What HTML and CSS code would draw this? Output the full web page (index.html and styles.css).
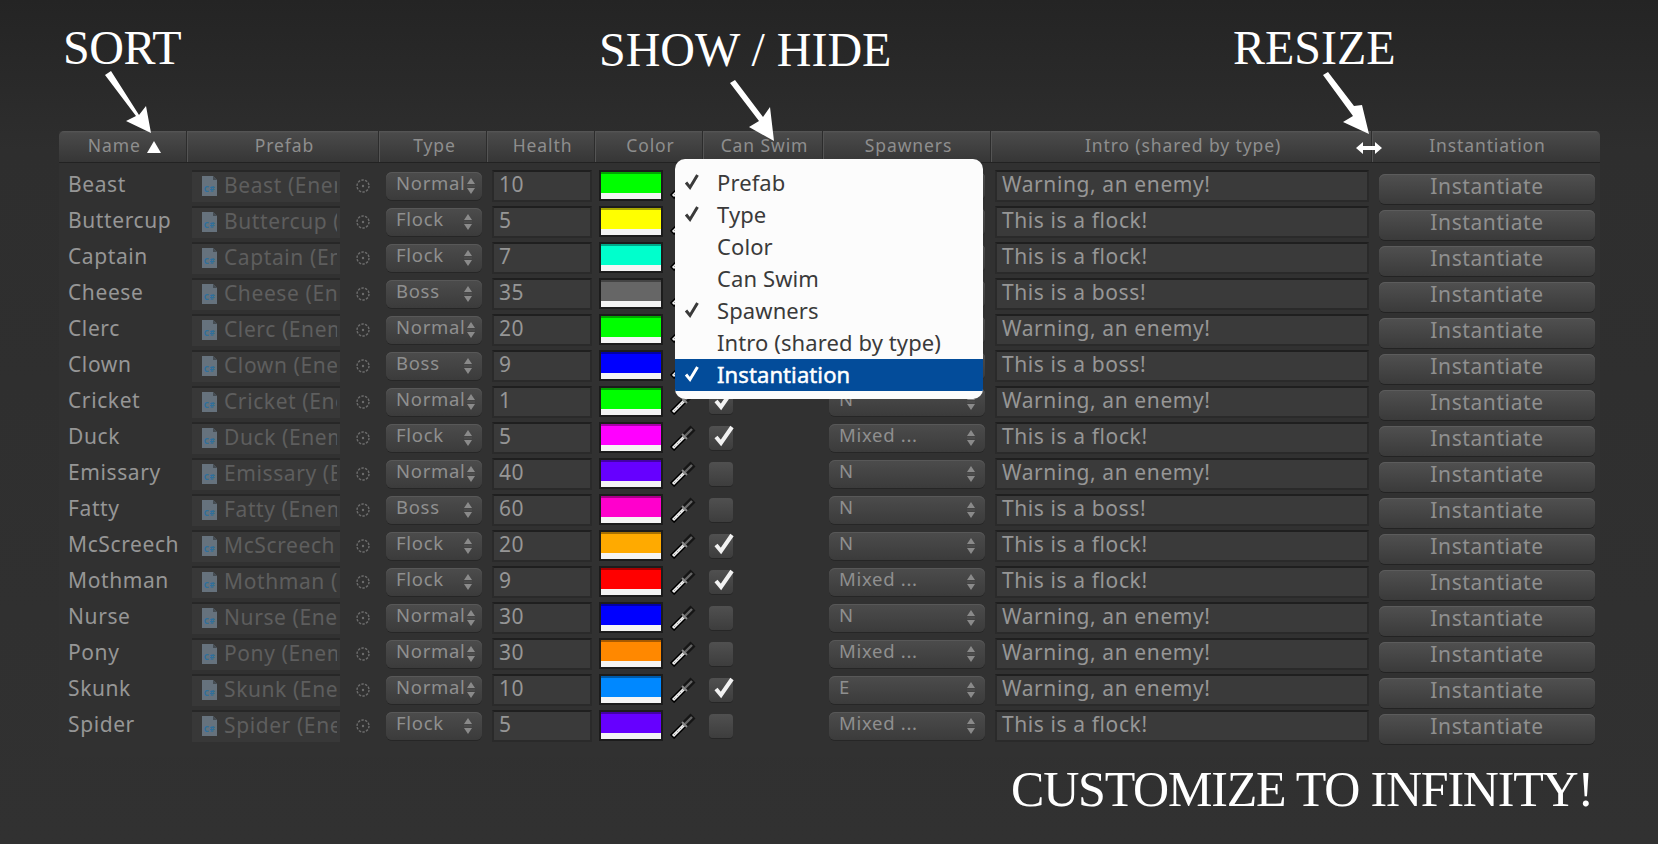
FILE: index.html

```html
<!DOCTYPE html>
<html lang="en">
  <head>
    <meta charset="UTF-8" />
    <title>Customize to infinity</title>
    <link rel="stylesheet" href="styles.css">
  </head>
  <body>
    <svg class="defs" width="0" height="0">
      <symbol id="cs" viewBox="0 0 15 20">
        <path d="M0 0h11l4 4v16H0z" fill="#66727d"/>
        <path d="M11 0l4 4h-4z" fill="#454c52"/>
        <text x="7.5" y="16" class="cs-text">C#</text>
      </symbol>
      <symbol id="pick" viewBox="0 0 14 14">
        <circle cx="7" cy="7" r="6" fill="none" stroke="#6c6c6c" stroke-width="1.4" stroke-dasharray="2.4 1.3"/>
        <circle cx="7" cy="7" r="1.2" fill="#6c6c6c"/>
      </symbol>
      <symbol id="arrows" viewBox="0 0 10 16">
        <path d="M5 0l4 6H1z M1 10h8l-4 6z" fill="#8a8a8a"/>
        <path d="M1 8h8" stroke="#555" stroke-width="1"/>
      </symbol>
      <symbol id="dropper" viewBox="0 0 26 26">
        <path d="M2 24L15 11" stroke="#000" stroke-width="6"/>
        <path d="M3 23L15 11" stroke="#eee" stroke-width="3"/>
        <path d="M4 22L14 12" stroke="#999" stroke-width="1" stroke-dasharray="2 2"/>
        <path d="M14 12L23 3" stroke="#151515" stroke-width="7"/>
        <path d="M15 11L22 4" stroke="#666" stroke-width="2.4"/>
        <path d="M12 9l5 5" stroke="#8a8a8a" stroke-width="2"/>
      </symbol>
      <symbol id="tick" viewBox="0 0 24 24">
        <path d="M5 12l5 6L21 2" fill="none" stroke="#f2f2f2" stroke-width="4"/>
      </symbol>
      <symbol id="mtick" viewBox="0 0 16 18">
        <path d="M2 9.5l4 5L13.500 2" fill="none" stroke="currentColor" stroke-width="3"/>
      </symbol>
    </svg>

    <div class="page">
      <div class="label label-sort">SORT</div>
      <div class="label label-show">SHOW / HIDE</div>
      <div class="label label-resize">RESIZE</div>
      <div class="label label-end">CUSTOMIZE TO INFINITY!</div>

      <div class="panel">
        <div class="head">
          <div class="hcell">Name <span class="sort-tri"></span></div>
          <div class="hcell">Prefab</div>
          <div class="hcell">Type</div>
          <div class="hcell">Health</div>
          <div class="hcell">Color</div>
          <div class="hcell">Can Swim</div>
          <div class="hcell">Spawners</div>
          <div class="hcell">Intro (shared by type)</div>
          <div class="hcell">Instantiation</div>
        </div>

        <div class="row">
          <div class="name">Beast</div>
          <div class="prefab"><div class="ofield"><svg class="cs"><use href="#cs"/></svg><span>Beast (Enemy)</span></div><svg class="pick"><use href="#pick"/></svg></div>
          <div class="popup type">Normal<svg class="updown"><use href="#arrows"/></svg></div>
          <div class="field health">10</div>
          <div class="colorcell"><div class="swatch c-green"></div><svg class="dropper"><use href="#dropper"/></svg></div>
          <div class="check"><svg><use href="#tick"/></svg></div>
          <div class="popup spawn">N<svg class="updown"><use href="#arrows"/></svg></div>
          <div class="field intro">Warning, an enemy!</div>
          <div class="btn">Instantiate</div>
        </div>
        <div class="row">
          <div class="name">Buttercup</div>
          <div class="prefab"><div class="ofield"><svg class="cs"><use href="#cs"/></svg><span>Buttercup (Enemy)</span></div><svg class="pick"><use href="#pick"/></svg></div>
          <div class="popup type">Flock<svg class="updown"><use href="#arrows"/></svg></div>
          <div class="field health">5</div>
          <div class="colorcell"><div class="swatch c-yellow"></div><svg class="dropper"><use href="#dropper"/></svg></div>
          <div class="check"></div>
          <div class="popup spawn">N<svg class="updown"><use href="#arrows"/></svg></div>
          <div class="field intro">This is a flock!</div>
          <div class="btn">Instantiate</div>
        </div>
        <div class="row">
          <div class="name">Captain</div>
          <div class="prefab"><div class="ofield"><svg class="cs"><use href="#cs"/></svg><span>Captain (Enemy)</span></div><svg class="pick"><use href="#pick"/></svg></div>
          <div class="popup type">Flock<svg class="updown"><use href="#arrows"/></svg></div>
          <div class="field health">7</div>
          <div class="colorcell"><div class="swatch c-aqua"></div><svg class="dropper"><use href="#dropper"/></svg></div>
          <div class="check"></div>
          <div class="popup spawn">N<svg class="updown"><use href="#arrows"/></svg></div>
          <div class="field intro">This is a flock!</div>
          <div class="btn">Instantiate</div>
        </div>
        <div class="row">
          <div class="name">Cheese</div>
          <div class="prefab"><div class="ofield"><svg class="cs"><use href="#cs"/></svg><span>Cheese (Enemy)</span></div><svg class="pick"><use href="#pick"/></svg></div>
          <div class="popup type">Boss<svg class="updown"><use href="#arrows"/></svg></div>
          <div class="field health">35</div>
          <div class="colorcell"><div class="swatch c-gray"></div><svg class="dropper"><use href="#dropper"/></svg></div>
          <div class="check"></div>
          <div class="popup spawn">N<svg class="updown"><use href="#arrows"/></svg></div>
          <div class="field intro">This is a boss!</div>
          <div class="btn">Instantiate</div>
        </div>
        <div class="row">
          <div class="name">Clerc</div>
          <div class="prefab"><div class="ofield"><svg class="cs"><use href="#cs"/></svg><span>Clerc (Enemy)</span></div><svg class="pick"><use href="#pick"/></svg></div>
          <div class="popup type">Normal<svg class="updown"><use href="#arrows"/></svg></div>
          <div class="field health">20</div>
          <div class="colorcell"><div class="swatch c-green"></div><svg class="dropper"><use href="#dropper"/></svg></div>
          <div class="check"></div>
          <div class="popup spawn">N<svg class="updown"><use href="#arrows"/></svg></div>
          <div class="field intro">Warning, an enemy!</div>
          <div class="btn">Instantiate</div>
        </div>
        <div class="row">
          <div class="name">Clown</div>
          <div class="prefab"><div class="ofield"><svg class="cs"><use href="#cs"/></svg><span>Clown (Enemy)</span></div><svg class="pick"><use href="#pick"/></svg></div>
          <div class="popup type">Boss<svg class="updown"><use href="#arrows"/></svg></div>
          <div class="field health">9</div>
          <div class="colorcell"><div class="swatch c-blue"></div><svg class="dropper"><use href="#dropper"/></svg></div>
          <div class="check"></div>
          <div class="popup spawn">N<svg class="updown"><use href="#arrows"/></svg></div>
          <div class="field intro">This is a boss!</div>
          <div class="btn">Instantiate</div>
        </div>
        <div class="row">
          <div class="name">Cricket</div>
          <div class="prefab"><div class="ofield"><svg class="cs"><use href="#cs"/></svg><span>Cricket (Enemy)</span></div><svg class="pick"><use href="#pick"/></svg></div>
          <div class="popup type">Normal<svg class="updown"><use href="#arrows"/></svg></div>
          <div class="field health">1</div>
          <div class="colorcell"><div class="swatch c-green"></div><svg class="dropper"><use href="#dropper"/></svg></div>
          <div class="check"><svg><use href="#tick"/></svg></div>
          <div class="popup spawn">N<svg class="updown"><use href="#arrows"/></svg></div>
          <div class="field intro">Warning, an enemy!</div>
          <div class="btn">Instantiate</div>
        </div>
        <div class="row">
          <div class="name">Duck</div>
          <div class="prefab"><div class="ofield"><svg class="cs"><use href="#cs"/></svg><span>Duck (Enemy)</span></div><svg class="pick"><use href="#pick"/></svg></div>
          <div class="popup type">Flock<svg class="updown"><use href="#arrows"/></svg></div>
          <div class="field health">5</div>
          <div class="colorcell"><div class="swatch c-magenta"></div><svg class="dropper"><use href="#dropper"/></svg></div>
          <div class="check"><svg><use href="#tick"/></svg></div>
          <div class="popup spawn">Mixed ...<svg class="updown"><use href="#arrows"/></svg></div>
          <div class="field intro">This is a flock!</div>
          <div class="btn">Instantiate</div>
        </div>
        <div class="row">
          <div class="name">Emissary</div>
          <div class="prefab"><div class="ofield"><svg class="cs"><use href="#cs"/></svg><span>Emissary (Enemy)</span></div><svg class="pick"><use href="#pick"/></svg></div>
          <div class="popup type">Normal<svg class="updown"><use href="#arrows"/></svg></div>
          <div class="field health">40</div>
          <div class="colorcell"><div class="swatch c-violet"></div><svg class="dropper"><use href="#dropper"/></svg></div>
          <div class="check"></div>
          <div class="popup spawn">N<svg class="updown"><use href="#arrows"/></svg></div>
          <div class="field intro">Warning, an enemy!</div>
          <div class="btn">Instantiate</div>
        </div>
        <div class="row">
          <div class="name">Fatty</div>
          <div class="prefab"><div class="ofield"><svg class="cs"><use href="#cs"/></svg><span>Fatty (Enemy)</span></div><svg class="pick"><use href="#pick"/></svg></div>
          <div class="popup type">Boss<svg class="updown"><use href="#arrows"/></svg></div>
          <div class="field health">60</div>
          <div class="colorcell"><div class="swatch c-pink"></div><svg class="dropper"><use href="#dropper"/></svg></div>
          <div class="check"></div>
          <div class="popup spawn">N<svg class="updown"><use href="#arrows"/></svg></div>
          <div class="field intro">This is a boss!</div>
          <div class="btn">Instantiate</div>
        </div>
        <div class="row">
          <div class="name">McScreech</div>
          <div class="prefab"><div class="ofield"><svg class="cs"><use href="#cs"/></svg><span>McScreech (Enemy)</span></div><svg class="pick"><use href="#pick"/></svg></div>
          <div class="popup type">Flock<svg class="updown"><use href="#arrows"/></svg></div>
          <div class="field health">20</div>
          <div class="colorcell"><div class="swatch c-amber"></div><svg class="dropper"><use href="#dropper"/></svg></div>
          <div class="check"><svg><use href="#tick"/></svg></div>
          <div class="popup spawn">N<svg class="updown"><use href="#arrows"/></svg></div>
          <div class="field intro">This is a flock!</div>
          <div class="btn">Instantiate</div>
        </div>
        <div class="row">
          <div class="name">Mothman</div>
          <div class="prefab"><div class="ofield"><svg class="cs"><use href="#cs"/></svg><span>Mothman (Enemy)</span></div><svg class="pick"><use href="#pick"/></svg></div>
          <div class="popup type">Flock<svg class="updown"><use href="#arrows"/></svg></div>
          <div class="field health">9</div>
          <div class="colorcell"><div class="swatch c-red"></div><svg class="dropper"><use href="#dropper"/></svg></div>
          <div class="check"><svg><use href="#tick"/></svg></div>
          <div class="popup spawn">Mixed ...<svg class="updown"><use href="#arrows"/></svg></div>
          <div class="field intro">This is a flock!</div>
          <div class="btn">Instantiate</div>
        </div>
        <div class="row">
          <div class="name">Nurse</div>
          <div class="prefab"><div class="ofield"><svg class="cs"><use href="#cs"/></svg><span>Nurse (Enemy)</span></div><svg class="pick"><use href="#pick"/></svg></div>
          <div class="popup type">Normal<svg class="updown"><use href="#arrows"/></svg></div>
          <div class="field health">30</div>
          <div class="colorcell"><div class="swatch c-blue"></div><svg class="dropper"><use href="#dropper"/></svg></div>
          <div class="check"></div>
          <div class="popup spawn">N<svg class="updown"><use href="#arrows"/></svg></div>
          <div class="field intro">Warning, an enemy!</div>
          <div class="btn">Instantiate</div>
        </div>
        <div class="row">
          <div class="name">Pony</div>
          <div class="prefab"><div class="ofield"><svg class="cs"><use href="#cs"/></svg><span>Pony (Enemy)</span></div><svg class="pick"><use href="#pick"/></svg></div>
          <div class="popup type">Normal<svg class="updown"><use href="#arrows"/></svg></div>
          <div class="field health">30</div>
          <div class="colorcell"><div class="swatch c-orange"></div><svg class="dropper"><use href="#dropper"/></svg></div>
          <div class="check"></div>
          <div class="popup spawn">Mixed ...<svg class="updown"><use href="#arrows"/></svg></div>
          <div class="field intro">Warning, an enemy!</div>
          <div class="btn">Instantiate</div>
        </div>
        <div class="row">
          <div class="name">Skunk</div>
          <div class="prefab"><div class="ofield"><svg class="cs"><use href="#cs"/></svg><span>Skunk (Enemy)</span></div><svg class="pick"><use href="#pick"/></svg></div>
          <div class="popup type">Normal<svg class="updown"><use href="#arrows"/></svg></div>
          <div class="field health">10</div>
          <div class="colorcell"><div class="swatch c-sky"></div><svg class="dropper"><use href="#dropper"/></svg></div>
          <div class="check"><svg><use href="#tick"/></svg></div>
          <div class="popup spawn">E<svg class="updown"><use href="#arrows"/></svg></div>
          <div class="field intro">Warning, an enemy!</div>
          <div class="btn">Instantiate</div>
        </div>
        <div class="row">
          <div class="name">Spider</div>
          <div class="prefab"><div class="ofield"><svg class="cs"><use href="#cs"/></svg><span>Spider (Enemy)</span></div><svg class="pick"><use href="#pick"/></svg></div>
          <div class="popup type">Flock<svg class="updown"><use href="#arrows"/></svg></div>
          <div class="field health">5</div>
          <div class="colorcell"><div class="swatch c-violet"></div><svg class="dropper"><use href="#dropper"/></svg></div>
          <div class="check"></div>
          <div class="popup spawn">Mixed ...<svg class="updown"><use href="#arrows"/></svg></div>
          <div class="field intro">This is a flock!</div>
          <div class="btn">Instantiate</div>
        </div>
      </div>

      <!-- column menu, over the table -->
      <div class="menu">
        <div class="mitem"><svg class="mtick"><use href="#mtick"/></svg>Prefab</div>
        <div class="mitem"><svg class="mtick"><use href="#mtick"/></svg>Type</div>
        <div class="mitem">Color</div>
        <div class="mitem">Can Swim</div>
        <div class="mitem"><svg class="mtick"><use href="#mtick"/></svg>Spawners</div>
        <div class="mitem">Intro (shared by type)</div>
        <div class="mitem active"><svg class="mtick"><use href="#mtick"/></svg>Instantiation</div>
      </div>

      <!-- hand drawn arrows, over everything -->
      <svg class="marks" width="1658" height="844" viewBox="0 0 1658 844">
        <g fill="#fff">
          <path d="M105 75l6-4 28 44 7-9 5 27-25-12 10-5z"/>
          <path d="M730 83l5-3 28 37 7-10 4 34-25-14 10-6z"/>
          <path d="M1323 75l5-3 26 34 8-1 7 29-26-12 10-6z"/>
          <path d="M1356 148l7-6v4h12v-4l7 6-7 6v-4h-12v4z"/>
        </g>
      </svg>
    </div>
  </body>
</html>
```

FILE: styles.css

```css
/* page */
body {
  margin: 0;
  background-color: #303030;
  font-family: "Noto Sans", sans-serif;
}

.defs {
  position: absolute;
}

.cs-text {
  font-size: 8px;
  font-weight: bold;
  text-anchor: middle;
  fill: #2f6f9c;
}

.page {
  position: relative;
  width: 1658px;
  height: 844px;
  overflow: hidden;
  box-sizing: border-box;
  padding: 131px 0 0 59px;
  background: linear-gradient(#242424, #2e2e2e 150px, #313131);
}

/* big serif captions */
.label {
  position: absolute;
  color: #fff;
  font-family: "Liberation Serif", serif;
  font-size: 48px;
  line-height: 56px;
  white-space: nowrap;
}

.label-sort {
  left: 63px;
  top: 20px;
  letter-spacing: -0.4px;
}

.label-show {
  left: 599px;
  top: 22px;
  letter-spacing: 0;
}

.label-resize {
  left: 1233px;
  top: 20px;
  letter-spacing: 0;
}

.label-end {
  left: 1011px;
  top: 761px;
  font-size: 50px;
  letter-spacing: -1.2px;
}

/* table */
.panel {
  width: 1541px;
  height: 626px;
  background-color: #313131;
}

.head,
.row {
  display: grid;
  grid-template-columns: 128px 192px 108px 108px 108px 120px 168px 381px 227px;
}

.head {
  height: 31px;
  margin-bottom: 5px;
  border-radius: 5px 5px 0 0;
  background: linear-gradient(#575757, #4a4a4a 2px, #363636);
  border-bottom: 1px solid #222;
}

.hcell {
  display: flex;
  align-items: center;
  justify-content: center;
  padding: 0 0 4px 4px;
  color: #8e8e8e;
  font-size: 17.500px;
  letter-spacing: 0.9px;
  white-space: pre;
  border-right: 1px solid #2c2c2c;
  box-shadow: 1px 0 0 #545454;
}

.hcell:last-child {
  border-right: none;
  box-shadow: none;
}

.sort-tri {
  width: 0;
  height: 0;
  margin: 4px 0 0 1px;
  border-left: 7px solid transparent;
  border-right: 7px solid transparent;
  border-bottom: 12px solid #fff;
}

.row {
  height: 36px;
  color: #969696;
  font-size: 21px;
  letter-spacing: 0.6px;
}

.name {
  padding-left: 9px;
  line-height: 32px;
  white-space: nowrap;
}

.prefab {
  display: flex;
  align-items: center;
  height: 34px;
  padding-left: 5px;
}

.ofield {
  display: flex;
  align-items: center;
  box-sizing: border-box;
  width: 148px;
  height: 32px;
  margin-top: 2px;
  padding: 0 3px 2px 10px;
  overflow: hidden;
  white-space: nowrap;
  color: #5e5e5e;
  background-color: #383838;
  border-top: 2px solid #272727;
}

.cs {
  flex: none;
  width: 15px;
  height: 20px;
  margin-right: 7px;
}

.ofield span {
  margin-bottom: 3px;
  overflow: hidden;
}

.pick {
  flex: none;
  width: 14px;
  height: 14px;
  margin: 2px 0 0 16px;
}

.popup {
  display: flex;
  align-items: center;
  justify-content: space-between;
  box-sizing: border-box;
  height: 28px;
  margin-top: 4px;
  padding: 0 9px 0 10px;
  color: #8f8f8f;
  font-size: 18.500px;
  line-height: 20px;
  letter-spacing: 0.700px;
  white-space: nowrap;
  border-radius: 6px;
  background: linear-gradient(#4c4c4c, #3b3b3b);
  box-shadow: 0 1px 0 #262626, inset 0 1px 0 #585858;
}

.popup {
  padding-bottom: 7px;
}

.type {
  width: 96px;
  margin-left: 7px;
}

.spawn {
  width: 156px;
  margin-left: 6px;
}

.updown {
  flex: none;
  width: 10px;
  height: 16px;
  margin-top: 7px;
}

.field {
  box-sizing: border-box;
  height: 32px;
  margin-top: 2px;
  padding-left: 5px;
  line-height: 24px;
  white-space: nowrap;
  background-color: #3a3a3a;
  border: 2px solid #2a2a2a;
  border-top-color: #1f1f1f;
}

.health {
  width: 100px;
  margin-left: 5px;
}

.intro {
  width: 374px;
  margin-left: 4px;
}

.colorcell {
  display: flex;
  padding-left: 4px;
}

.swatch {
  box-sizing: border-box;
  width: 64px;
  height: 31px;
  margin-top: 2px;
  border: 2px solid #1c1c1c;
  box-shadow: inset 0 -1px 0 #aaa;
}

.swatch::after {
  content: "";
  display: block;
  height: 6px;
  margin-top: 21px;
  background-color: #f4f4f4;
}

.dropper {
  flex: none;
  width: 26px;
  height: 26px;
  margin: 5px 0 0 7px;
}

.c-green { background: linear-gradient(#00a800 2px, #00ff00 2px); }
.c-yellow { background: linear-gradient(#a8a800 2px, #ffff00 2px); }
.c-aqua { background: linear-gradient(#00a888 2px, #00ffcc 2px); }
.c-gray { background: linear-gradient(#444 2px, #666 2px); }
.c-blue { background: linear-gradient(#0000a8 2px, #0000ff 2px); }
.c-magenta { background: linear-gradient(#a800a8 2px, #ff00ff 2px); }
.c-violet { background: linear-gradient(#4400a8 2px, #6600ff 2px); }
.c-pink { background: linear-gradient(#a80088 2px, #ff00cc 2px); }
.c-amber { background: linear-gradient(#a87000 2px, #ffaa00 2px); }
.c-red { background: linear-gradient(#a80000 2px, #ff0000 2px); }
.c-orange { background: linear-gradient(#a85a00 2px, #ff8800 2px); }
.c-sky { background: linear-gradient(#005aa8 2px, #0088ff 2px); }

.check {
  position: relative;
  width: 24px;
  height: 24px;
  margin: 6px 0 0 6px;
  border-radius: 4px;
  background: linear-gradient(#505050, #3d3d3d);
  box-shadow: 0 1px 0 #262626;
}

.check svg {
  position: absolute;
  left: 2px;
  top: -1px;
  width: 24px;
  height: 24px;
}

.btn {
  width: 216px;
  height: 30px;
  margin: 6px 0 0 7px;
  color: #8f8f8f;
  text-align: center;
  line-height: 24px;
  border-radius: 6px;
  background: linear-gradient(#505050, #3a3a3a);
  box-shadow: 0 1px 0 #232323, inset 0 1px 0 #5c5c5c;
}

/* context menu */
.menu {
  position: absolute;
  left: 675px;
  top: 159px;
  box-sizing: border-box;
  width: 308px;
  height: 240px;
  padding-top: 8px;
  overflow: hidden;
  border-radius: 10px;
  background-color: #fcfcfc;
  font-size: 22px;
  letter-spacing: 0.1px;
  color: #3a3a3a;
}

.mitem {
  position: relative;
  height: 32px;
  padding-left: 42px;
  line-height: 30px;
}

.mtick {
  position: absolute;
  left: 9px;
  top: 6px;
  width: 16px;
  height: 18px;
}

.mitem.active {
  color: #fff;
  -webkit-text-stroke: 0.5px #fff;
  background-color: #034c9a;
}

.marks {
  position: absolute;
  left: 0;
  top: 0;
}
```
